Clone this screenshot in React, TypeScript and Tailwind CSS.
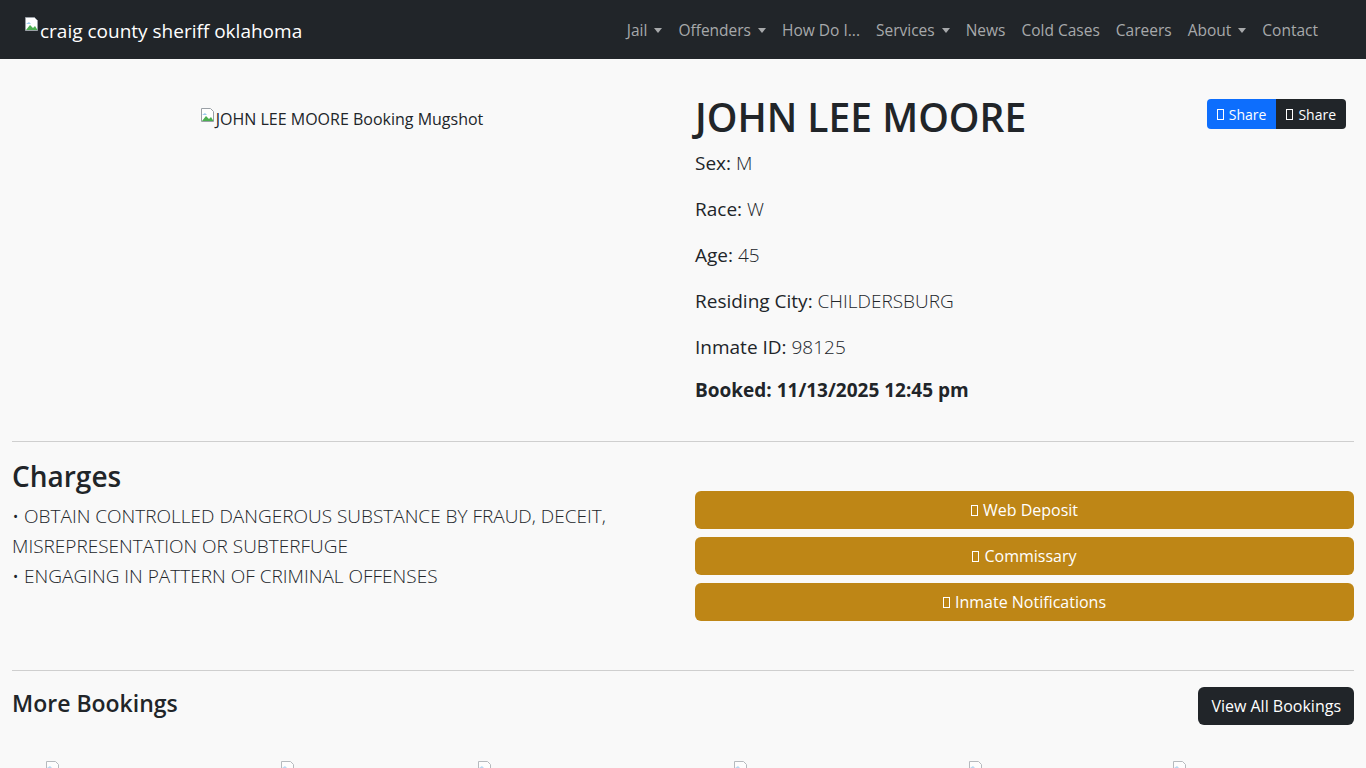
const Tofu = () => (
  <span className="inline-block w-[7px] h-[11px] border border-current align-[-1px] mr-[5px]" />
);

const Broken = () => (
  <svg width="16" height="16" viewBox="0 0 16 16" className="inline-block align-top">
    <path d="M1.5 1.5h9l3 3v10h-12z" fill="#fff" stroke="#9aa0a6" />
    <path d="M2 14l4-5 3 3 2-2 2.5 4z" fill="#4caf50" />
    <path d="M2 8l3-2 2 2" fill="#9ecbee" stroke="none" />
  </svg>
);

function NavItem({ label, caret }: { label: string; caret?: boolean }) {
  return (
    <span className="px-2 flex items-center text-[15.5px] text-[#a7a9ab]">
      {label}
      {caret && (
        <span className="ml-[7px] inline-block border-t-[5px] border-x-[4px] border-x-transparent border-t-current" />
      )}
    </span>
  );
}

function InfoLine({ label, value, mb = "mb-4" }: { label: string; value: string; mb?: string }) {
  return (
    <p className={`text-[19px] leading-[30px] ${mb}`}>
      {label}: <span className="font-light">{value}</span>
    </p>
  );
}

export default function App() {
  const nav: [string, boolean][] = [
    ["Jail", true],
    ["Offenders", true],
    ["How Do I...", false],
    ["Services", true],
    ["News", false],
    ["Cold Cases", false],
    ["Careers", false],
    ["About", true],
    ["Contact", false],
  ];
  return (
    <div className="min-h-screen bg-[#f9f9f9] text-[#212529] font-['Open_Sans',sans-serif]">
      <nav className="h-[59px] bg-[#212529] flex items-center justify-between pl-6 pr-10">
        <div className="flex items-start text-white text-[19px] leading-[30px] mt-[2px]">
          <Broken />
          <span>craig county sheriff oklahoma</span>
        </div>
        <div className="flex items-center mt-[2px]">
          {nav.map(([l, c]) => (
            <NavItem key={l} label={l} caret={c} />
          ))}
        </div>
      </nav>

      <div className="px-3 pt-[37px]">
        <div className="grid grid-cols-2 gap-6">
          <div className="flex justify-center pt-[11px]">
            <div className="flex items-start text-[16px] leading-6">
              <Broken />
              <span>JOHN LEE MOORE Booking Mugshot</span>
            </div>
          </div>
          <div>
            <div className="flex justify-between items-start">
              <h1 className="text-[39px] leading-[42px] font-semibold mb-[10px]">JOHN LEE MOORE</h1>
              <div className="flex mt-[3px] mr-2 text-[14px] text-white">
                <span className="h-[30px] px-[10px] flex items-center bg-[#0d6efd] rounded-l-[4px]">
                  <Tofu />Share
                </span>
                <span className="h-[30px] px-[10px] flex items-center bg-[#212529] rounded-r-[4px]">
                  <Tofu />Share
                </span>
              </div>
            </div>
            <InfoLine label="Sex" value="M" />
            <InfoLine label="Race" value="W" />
            <InfoLine label="Age" value="45" />
            <InfoLine label="Residing City" value="CHILDERSBURG" />
            <InfoLine label="Inmate ID" value="98125" mb="mb-[13px]" />
            <p className="text-[19px] leading-[30px] font-bold">Booked: 11/13/2025 12:45 pm</p>
          </div>
        </div>

        <hr className="mt-[36px] mb-4 border-[#cfcfcf]" />

        <div className="grid grid-cols-2 gap-6">
          <div>
            <h3 className="text-[28px] leading-[36px] font-semibold mb-[7px]">Charges</h3>
            <div className="text-[19px] leading-[30px] font-light">
              <p>• OBTAIN CONTROLLED DANGEROUS SUBSTANCE BY FRAUD, DECEIT, MISREPRESENTATION OR SUBTERFUGE</p>
              <p>• ENGAGING IN PATTERN OF CRIMINAL OFFENSES</p>
            </div>
          </div>
          <div className="pt-[33px] flex flex-col gap-2">
            {["Web Deposit", "Commissary", "Inmate Notifications"].map((b) => (
              <div
                key={b}
                className="h-[38px] rounded-[6px] bg-[#be8616] text-white text-[16px] flex items-center justify-center"
              >
                <Tofu />
                {b}
              </div>
            ))}
          </div>
        </div>

        <hr className="mt-[49px] mb-4 border-[#cfcfcf]" />

        <div className="flex justify-between items-center">
          <h4 className="text-[23px] leading-[32px] font-semibold -mt-[6px]">More Bookings</h4>
          <span className="h-[38px] px-[13px] rounded-[6px] bg-[#212529] text-white text-[16px] flex items-center">
            View All Bookings
          </span>
        </div>

        <div className="relative h-[60px] mt-[35px]">
          {[45, 280, 477, 733, 968, 1172].map((x) => (
            <span key={x} className="absolute top-0 opacity-70" style={{ left: x - 12 }}>
              <Broken />
            </span>
          ))}
        </div>
      </div>
    </div>
  );
}
